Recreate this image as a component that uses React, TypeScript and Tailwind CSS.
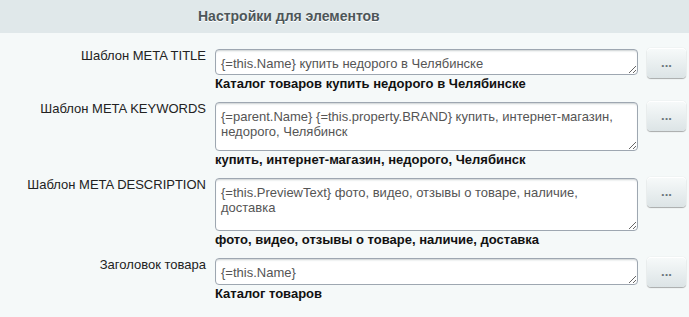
import React from 'react';

type Row = {
  label: string;
  value: string;
  caption: string;
  h: string;
};

const rows: Row[] = [
  {
    label: 'Шаблон META TITLE',
    value: '{=this.Name} купить недорого в Челябинске',
    caption: 'Каталог товаров купить недорого в Челябинске',
    h: 'h-[26px]',
  },
  {
    label: 'Шаблон META KEYWORDS',
    value: '{=parent.Name} {=this.property.BRAND} купить, интернет-магазин, недорого, Челябинск',
    caption: 'купить, интернет-магазин, недорого, Челябинск',
    h: 'h-[49px]',
  },
  {
    label: 'Шаблон META DESCRIPTION',
    value: '{=this.PreviewText} фото, видео, отзывы о товаре, наличие, доставка',
    caption: 'фото, видео, отзывы о товаре, наличие, доставка',
    h: 'h-[53px]',
  },
  {
    label: 'Заголовок товара',
    value: '{=this.Name}',
    caption: 'Каталог товаров',
    h: 'h-[27px]',
  },
];

const FieldRow = ({ row }: { row: Row }) => (
  <div className="flex items-start pb-[10px]">
    <div className="w-[206px] mr-[9px] text-right text-[13px] leading-[16px] text-[#222] -mt-[1px]">
      {row.label}
    </div>
    <div className="w-[423px] flex flex-col">
      <textarea
        defaultValue={row.value}
        spellCheck={false}
        className={`${row.h} w-full block bg-white border border-[#9ea7b1] rounded-[4px] px-[5px] pt-[6px] text-[13px] leading-[15px] text-[#555] outline-none shadow-[inset_0_2px_2px_-1px_rgba(180,188,191,0.7)] resize-y overflow-hidden`}
        style={{ fontFamily: '"Liberation Sans", Arial, sans-serif' }}
      />
      <div className="mt-[1px] text-[13px] leading-[16px] font-bold text-[#111]">{row.caption}</div>
    </div>
    <button className="ml-[9px] -mt-[1px] w-[39px] h-[30px] rounded-[4px] bg-gradient-to-b from-[#f7fafa] to-[#dce4e6] shadow-[0_0_1px_rgba(0,0,0,0.2),0_1px_1px_rgba(0,0,0,0.3),inset_0_1px_0_#fff] text-[13px] font-bold text-[#6b767c] leading-none pb-[2px]">
      ...
    </button>
  </div>
);

export default function App() {
  return (
    <div
      className="w-full h-[317px] bg-[#f5f9f9] overflow-hidden"
      style={{ fontFamily: '"Liberation Sans", Arial, sans-serif' }}
    >
      <div className="h-[33px] bg-[#e0e8ea] flex items-center pl-[198px]">
        <span className="text-[14px] font-bold text-[#4d5659] [text-shadow:0_1px_0_#fff]">
          Настройки для элементов
        </span>
      </div>
      <div className="pt-[16px]">
        {rows.map((r, i) => (
          <FieldRow key={i} row={r} />
        ))}
      </div>
    </div>
  );
}
